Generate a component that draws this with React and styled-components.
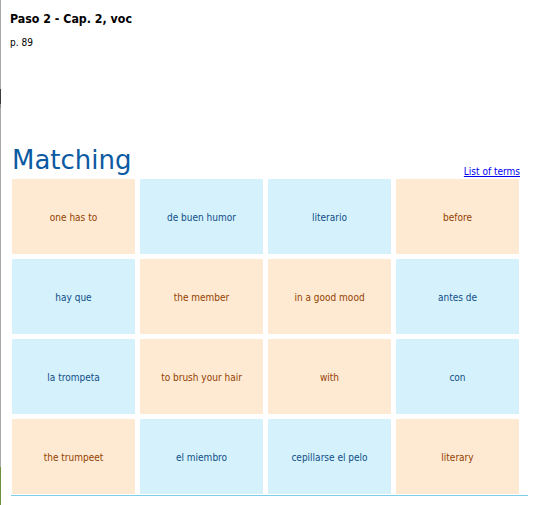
import React from "react";
import styled, { createGlobalStyle } from "styled-components";

const Global = createGlobalStyle`
  html, body { margin: 0; padding: 0; background: #fff; }
  body {
    font-family: "DejaVu Sans Condensed", "DejaVu Sans", Verdana, sans-serif;
    font-stretch: condensed;
    min-height: 505px;
    box-sizing: border-box;
    padding-left: 1px;
    background:
      linear-gradient(
        to bottom,
        #a8a8a8 0 89px,
        #3c3c3c 89px 104px,
        #8a8a8a 104px 108px,
        #a8a8a8 108px 467px,
        #6f8f3c 467px 100%
      ) left top / 1px 100% no-repeat,
      #fff;
  }
`;

const Page = styled.div`
  padding: 12px 13px 0 9px;
`;

const Heading = styled.h1`
  margin: 0;
  font-size: 12.3px;
  font-weight: bold;
  color: #000;
  line-height: 15px;
`;

const PageRef = styled.p`
  margin: 9px 0 0;
  font-size: 10px;
  line-height: 13px;
  color: #000;
`;

const Activity = styled.section`
  margin-top: 96px;
  padding-left: 2px;
`;

const TitleRow = styled.div`
  display: flex;
  justify-content: space-between;
  align-items: flex-end;
  height: 34px;
  padding-bottom: 4px;
  box-sizing: border-box;
  width: 508px;
`;

const Title = styled.h2`
  margin: 0;
  font-family: "DejaVu Sans", Verdana, sans-serif;
  font-stretch: normal;
  font-weight: normal;
  font-size: 26px;
  line-height: 30px;
  color: #0b5aa2;
`;

const TermsLink = styled.a`
  font-size: 10px;
  color: #0000ee;
  text-decoration: underline;
  margin-bottom: -2px;
`;

const Grid = styled.div`
  display: grid;
  grid-template-columns: repeat(4, 123px);
  grid-auto-rows: 75px;
  column-gap: 5px;
  row-gap: 5px;
`;

const Tile = styled.div`
  display: flex;
  align-items: center;
  justify-content: center;
  text-align: center;
  font-size: 10px;
  padding-top: 2px;
  box-sizing: border-box;
  background: ${(p) => (p.$tone === "peach" ? "#fee9d3" : "#d4f1fc")};
  color: ${(p) => (p.$tone === "peach" ? "#934200" : "#114e88")};
`;

const Rule = styled.div`
  margin: 1px 0 0 -1px;
  height: 1px;
  width: 517px;
  background: #7fcde6;
`;

const tiles = [
  ["one has to", "peach"],
  ["de buen humor", "blue"],
  ["literario", "blue"],
  ["before", "peach"],
  ["hay que", "blue"],
  ["the member", "peach"],
  ["in a good mood", "peach"],
  ["antes de", "blue"],
  ["la trompeta", "blue"],
  ["to brush your hair", "peach"],
  ["with", "peach"],
  ["con", "blue"],
  ["the trumpeet", "peach"],
  ["el miembro", "blue"],
  ["cepillarse el pelo", "blue"],
  ["literary", "peach"],
];

export default function App() {
  return (
    <>
      <Global />
      <Page>
        <Heading>Paso 2 - Cap. 2, voc</Heading>
        <PageRef>p. 89</PageRef>
        <Activity>
          <TitleRow>
            <Title>Matching</Title>
            <TermsLink href="#">List of terms</TermsLink>
          </TitleRow>
          <Grid>
            {tiles.map(([t, tone]) => (
              <Tile key={t} $tone={tone}>{t}</Tile>
            ))}
          </Grid>
          <Rule />
        </Activity>
      </Page>
    </>
  );
}
